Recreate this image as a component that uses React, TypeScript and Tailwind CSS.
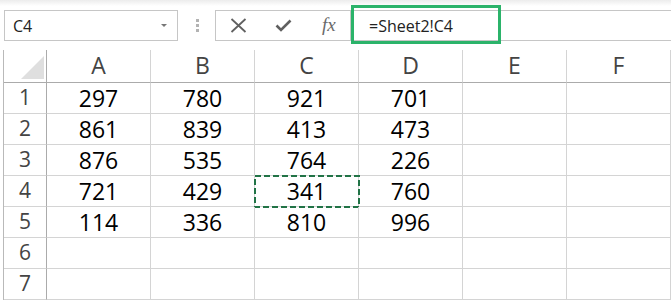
import React from "react";

const cols = ["A", "B", "C", "D", "E", "F"];
const data: (string | null)[][] = [
  ["297", "780", "921", "701", null, null],
  ["861", "839", "413", "473", null, null],
  ["876", "535", "764", "226", null, null],
  ["721", "429", "341", "760", null, null],
  ["114", "336", "810", "996", null, null],
  [null, null, null, null, null, null],
  [null, null, null, null, null, null],
];

export default function App() {
  return (
    <div
      className="w-[671px] h-[302px] bg-white overflow-hidden relative"
      style={{ fontFamily: '"Open Sans", "Noto Sans", sans-serif' }}
    >
      {/* Formula bar */}
      <div className="h-[50px] bg-gradient-to-b from-[#ececec] via-white via-[12%] to-white relative">
        <div className="flex items-start pt-[10px] pl-[4px]">
          <div className="w-[174px] h-[31px] border border-[#c6c6c6] bg-white flex items-center justify-between pl-[8px] pr-[10px]">
            <span className="text-[16px] text-[#222] leading-none">C4</span>
            <svg width="6" height="4" viewBox="0 0 6 4">
              <path d="M0 0 L6 0 L3 3 Z" fill="#777" />
            </svg>
          </div>
          <div className="w-[37px] h-[31px] flex flex-col items-center justify-center gap-[2px] pl-[1px]">
            <div className="w-[3px] h-[3px] bg-[#b3b3b3]" />
            <div className="w-[3px] h-[3px] bg-[#b3b3b3]" />
            <div className="w-[3px] h-[3px] bg-[#b3b3b3]" />
          </div>
          <div className="flex-1 h-[31px] border-y border-l border-[#c6c6c6] bg-white flex items-center">
            <div className="w-[135px] h-full border-r border-[#c6c6c6] flex items-center">
              <svg className="ml-[14px]" width="17" height="15" viewBox="0 0 17 15">
                <path d="M1.5 1 L15.5 14 M15.5 1 L1.5 14" stroke="#606060" strokeWidth="1.8" fill="none" />
              </svg>
              <svg className="ml-[28px]" width="17" height="13" viewBox="0 0 17 13">
                <path d="M1.5 6.5 L6 11 L15.5 1.5" stroke="#606060" strokeWidth="2.6" fill="none" />
              </svg>
              <span
                className="ml-[30px] italic text-[19px] text-[#6a6a6a] leading-none -mt-[2px]"
                style={{ fontFamily: '"Liberation Serif", "DejaVu Serif", serif' }}
              >
                fx
              </span>
            </div>
            <span className="pl-[18px] text-[16px] text-[#222] leading-none">=Sheet2!C4</span>
          </div>
        </div>
        {/* highlight annotation */}
        <div className="absolute left-[351px] top-[5px] w-[150px] h-[39px] border-[3px] border-[#2bb36a]" />
      </div>

      {/* Grid */}
      <div className="ml-[3px] border-l border-[#b9b9b9] grid grid-cols-[43px_repeat(6,104px)] auto-rows-[31px] grid-rows-[33px]">
        {/* corner */}
        <div className="border-r border-b border-[#ababab] flex items-end justify-end pr-[2px] pb-[3px]">
          <svg width="23" height="23" viewBox="0 0 23 23">
            <path d="M23 0 L23 23 L0 23 Z" fill="#dfdfdf" />
          </svg>
        </div>
        {cols.map((c) => (
          <div
            key={c}
            className="border-r border-[#d4d4d4] border-b border-b-[#ababab] flex items-end justify-center pb-[5px] text-[23px] text-[#444] leading-none"
          >
            {c}
          </div>
        ))}
        {data.map((row, r) => (
          <React.Fragment key={r}>
            <div className="border-r border-r-[#ababab] border-b border-[#d4d4d4] flex items-end justify-center pb-[5px] text-[21px] text-[#444] leading-none">
              {r + 1}
            </div>
            {row.map((v, ci) => (
              <div
                key={ci}
                className="relative border-r border-b border-[#d4d4d4] flex items-end justify-center pb-[3px] text-[23px] text-black leading-none"
              >
                {v}
                {r === 3 && ci === 2 && (
                  <svg
                    className="absolute -left-[1px] -top-[1px]"
                    width="106"
                    height="33"
                    viewBox="0 0 106 33"
                  >
                    <rect
                      x="1"
                      y="1"
                      width="104"
                      height="31"
                      fill="none"
                      stroke="#217346"
                      strokeWidth="2"
                      strokeDasharray="6 3"
                    />
                  </svg>
                )}
              </div>
            ))}
          </React.Fragment>
        ))}
      </div>
    </div>
  );
}
